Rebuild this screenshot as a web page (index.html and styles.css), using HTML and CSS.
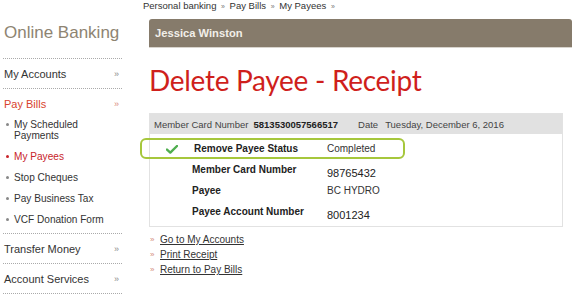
FILE: index.html
```html
<!DOCTYPE html>
<html>
<head>
<meta charset="utf-8">
<link rel="stylesheet" href="styles.css">
</head>
<body>
<div class="page">
  <aside class="side">
    <div class="brand">Online Banking</div>
    <div class="nav-row"><span>My Accounts</span><span class="raq">»</span></div>
    <div class="nav-group">
      <div class="nav-row active"><span>Pay Bills</span><span class="raq">»</span></div>
      <ul class="sub">
        <li>My Scheduled<br>Payments</li>
        <li class="current">My Payees</li>
        <li>Stop Cheques</li>
        <li>Pay Business Tax</li>
        <li>VCF Donation Form</li>
      </ul>
    </div>
    <div class="nav-row"><span>Transfer Money</span><span class="raq">»</span></div>
    <div class="nav-row last"><span>Account Services</span><span class="raq">»</span></div>
  </aside>
  <main class="main">
    <div class="crumbs">Personal banking <span class="sep">»</span> Pay Bills <span class="sep">»</span> My Payees <span class="sep">»</span></div>
    <div class="content">
      <div class="userbar">Jessica Winston</div>
      <h1 class="title">Delete Payee - Receipt</h1>
      <div class="receipt">
        <div class="rhead">
          <span class="hl">Member Card Number</span>
          <span class="hv">5813530057566517</span>
          <span class="hl date">Date</span>
          <span class="hd">Tuesday, December 6, 2016</span>
        </div>
        <div class="rbody">
          <div class="rrow">
            <span class="chk"><svg width="12" height="9" viewBox="0 0 12 9"><path d="M1 4.6 L4.3 7.6 L11 1" fill="none" stroke="#4fae4f" stroke-width="2.4" stroke-linecap="round" stroke-linejoin="round"/></svg></span>
            <span class="lbl">Remove Payee Status</span>
            <span class="val">Completed</span>
          </div>
          <div class="rrow">
            <span class="chk"></span>
            <span class="lbl">Member Card Number</span>
            <span class="val num">98765432</span>
          </div>
          <div class="rrow">
            <span class="chk"></span>
            <span class="lbl">Payee</span>
            <span class="val">BC HYDRO</span>
          </div>
          <div class="rrow">
            <span class="chk"></span>
            <span class="lbl">Payee Account Number</span>
            <span class="val num">8001234</span>
          </div>
        </div>
        <div class="highlight"></div>
      </div>
      <ul class="links">
        <li><span class="lq">»</span><a href="#">Go to My Accounts</a></li>
        <li><span class="lq">»</span><a href="#">Print Receipt</a></li>
        <li><span class="lq">»</span><a href="#">Return to Pay Bills</a></li>
      </ul>
    </div>
  </main>
</div>
</body>
</html>
```
FILE: styles.css
```css
html, body {
  margin: 0;
  padding: 0;
  background: #fff;
}
body {
  font-family: "Liberation Sans", Arial, sans-serif;
  color: #333;
  width: 580px;
  height: 297px;
  overflow: hidden;
}
.page {
  display: flex;
  align-items: flex-start;
}
.side {
  width: 119px;
  margin-left: 3px;
  flex: none;
}
.brand {
  font-size: 17px;
  line-height: 20px;
  color: #8e8472;
  padding: 23px 0 15px 1px;
  border-bottom: 1px dotted #aaa;
}
.nav-row {
  display: flex;
  justify-content: space-between;
  align-items: center;
  height: 29px;
  font-size: 11px;
  color: #333;
  padding-left: 1px;
  border-bottom: 1px dotted #aaa;
}
.nav-group .nav-row {
  border-bottom: none;
  height: 30px;
}
.nav-row.active {
  color: #d8432e;
}
.raq {
  font-size: 9px;
  color: #8a8a8a;
  padding-right: 3px;
}
.nav-row.active .raq {
  color: #d98a7e;
}
.nav-group {
  border-bottom: 1px dotted #aaa;
}
.sub {
  list-style: none;
  margin: 0;
  padding: 0 0 8px 0;
  display: flex;
  flex-direction: column;
  gap: 10px;
}
.sub li {
  font-size: 10.1px;
  line-height: 11px;
  padding-left: 11px;
  position: relative;
  color: #333;
  white-space: nowrap;
}
.sub li::before {
  content: "";
  position: absolute;
  left: 3px;
  top: 4px;
  width: 3px;
  height: 3px;
  border-radius: 50%;
  background: #888;
}
.sub li.current {
  color: #c8242a;
}
.sub li.current::before {
  background: #c8242a;
}
.main {
  margin-left: 21px;
  flex: 1;
}
.crumbs {
  font-size: 9.5px;
  line-height: 12px;
  color: #333;
  white-space: nowrap;
}
.crumbs .sep {
  font-size: 7px;
  color: #777;
  padding: 0 2px;
}
.content {
  padding-left: 6px;
}
.userbar {
  margin-top: 6px;
  width: 417px;
  height: 28px;
  line-height: 28px;
  padding-left: 6px;
  background: #867b6b;
  color: #f2efe9;
  font-weight: bold;
  font-size: 11.2px;
  border-radius: 3px 3px 0 0;
  box-shadow: 0 1px 0 #d8d4cd;
}
.title {
  margin: 17px 0 0 0;
  font-family: Lato, "Open Sans", sans-serif;
  font-weight: normal;
  font-size: 28px;
  line-height: 32px;
  color: #cf1f1c;
  letter-spacing: -0.3px;
  white-space: nowrap;
}
.receipt {
  position: relative;
  margin-top: 17px;
  width: 412px;
  border: 1px solid #e2e2e2;
}
.rhead {
  height: 20px;
  background: #e1e1e1;
  display: flex;
  align-items: center;
  font-size: 9.5px;
  color: #444;
  padding-left: 4px;
  white-space: nowrap;
}
.rhead span {
  flex: none;
}
.hl {
  margin-right: 5px;
}
.hv {
  font-weight: bold;
  color: #222;
  margin-right: 20px;
}
.hl.date {
  margin-right: 7px;
}
.rbody {
  padding: 5px 0 3px 0;
}
.rrow {
  display: flex;
  align-items: flex-start;
  height: 21px;
  line-height: 20px;
  white-space: nowrap;
}
.chk {
  width: 42px;
  flex: none;
  display: flex;
  justify-content: flex-end;
  padding-right: 14px;
  box-sizing: border-box;
  padding-top: 6px;
  line-height: 0;
}
.lbl {
  width: 135px;
  flex: none;
  font-weight: bold;
  font-size: 10px;
  color: #222;
}
.rrow:first-child .lbl {
  padding-left: 2px;
  width: 133px;
}
.val {
  font-size: 10px;
  color: #333;
}
.val.num {
  font-size: 11px;
  padding-top: 3px;
  color: #222;
}
.highlight {
  position: absolute;
  left: -10px;
  top: 24px;
  width: 261px;
  height: 17px;
  border: 2px solid #a6c73c;
  border-radius: 6px;
}
.links {
  list-style: none;
  margin: 5px 0 0 0;
  padding: 0;
}
.links li {
  font-size: 10px;
  line-height: 15px;
  display: flex;
}
.lq {
  width: 10px;
  color: #d48a80;
  font-size: 8px;
  padding-left: 1px;
}
.links a {
  color: #333;
  text-decoration: underline;
}
```
